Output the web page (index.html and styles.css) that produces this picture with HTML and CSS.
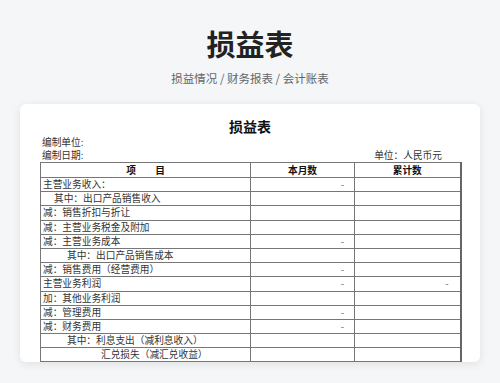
FILE: index.html
```html
<!DOCTYPE html>
<html lang="zh-CN">
<head>
<meta charset="utf-8">
<title>损益表</title>
<link rel="stylesheet" href="styles.css">
</head>
<body>
<div class="page">
  <h1 class="title">损益表</h1>
  <p class="sub">损益情况 / 财务报表 / 会计账表</p>
  <div class="card">
    <div class="sheet-title">损益表</div>
    <div class="meta">编制单位:</div>
    <div class="meta meta-row"><span>编制日期:</span><span>单位：人民币元</span></div>
    <table class="sheet">
      <colgroup><col class="c1"><col class="c2"><col class="c3"></colgroup>
      <tr class="head"><th>项　　目</th><th>本月数</th><th>累计数</th></tr>
      <tr><td>主营业务收入：</td><td class="num">-</td><td></td></tr>
      <tr><td class="i1">其中：出口产品销售收入</td><td></td><td></td></tr>
      <tr><td>减：销售折扣与折让</td><td></td><td></td></tr>
      <tr><td>减：主营业务税金及附加</td><td></td><td></td></tr>
      <tr><td>减：主营业务成本</td><td class="num">-</td><td></td></tr>
      <tr><td class="i2">其中：出口产品销售成本</td><td></td><td></td></tr>
      <tr><td>减：销售费用（经营费用）</td><td class="num">-</td><td></td></tr>
      <tr><td>主营业务利润</td><td class="num">-</td><td class="num">-</td></tr>
      <tr><td>加：其他业务利润</td><td></td><td></td></tr>
      <tr><td>减：管理费用</td><td class="num">-</td><td></td></tr>
      <tr><td>减：财务费用</td><td class="num">-</td><td></td></tr>
      <tr><td class="i2">其中：利息支出（减利息收入）</td><td></td><td></td></tr>
      <tr><td class="i3">汇兑损失（减汇兑收益）</td><td></td><td></td></tr>
      <tr><td>&nbsp;</td><td></td><td></td></tr>
    </table>
  </div>
</div>
</body>
</html>
```

FILE: styles.css
```css
html, body {
  margin: 0;
  padding: 0;
  height: 383px;
  overflow: hidden;
  background: #f5f6f8;
  font-family: "Noto Sans CJK SC", "Noto Sans", sans-serif;
}
.page {
  padding: 26px 20px 0;
}
.title {
  margin: 0;
  text-align: center;
  font-size: 29px;
  line-height: 34px;
  font-weight: 700;
  color: #222;
}
.sub {
  margin: 10px 0 0;
  text-align: center;
  font-size: 11.5px;
  line-height: 16px;
  color: #666;
}
.card {
  margin-top: 18px;
  height: 258px;
  background: #fff;
  border-radius: 6px;
  box-shadow: 0 2px 10px rgba(0, 0, 0, 0.09);
  overflow: hidden;
  padding: 0 20px;
}
.sheet-title {
  margin-top: 13px;
  text-align: center;
  font-size: 14px;
  line-height: 18px;
  font-weight: 700;
  color: #111;
}
.meta {
  margin-top: 1px;
  font-size: 9.7px;
  line-height: 13px;
  color: #333;
  padding-left: 2px;
}
.meta-row {
  margin-top: 0;
  display: flex;
  justify-content: space-between;
  padding-right: 18px;
}
.sheet {
  width: 420px;
  border-collapse: collapse;
  table-layout: fixed;
  font-size: 9.7px;
  color: #333;
  border-left: 1px solid #666;
  border-right: 2px solid #666;
}
.c1 { width: 210px; }
.c2 { width: 104px; }
.c3 { width: 106px; }
.sheet th, .sheet td {
  border: 1px solid #777;
  padding: 0 0 0 2px;
  height: 13.2px;
  line-height: 13px;
  white-space: nowrap;
  text-align: left;
}
.sheet tr.head th {
  height: 14px;
  text-align: center;
  font-weight: 700;
  color: #111;
  padding: 0;
}
.sheet td.num {
  text-align: right;
  padding-right: 10px;
  color: #666;
}
.sheet td.num:last-child {
  padding-right: 11px;
}
.sheet td.i1 { padding-left: 13px; }
.sheet td.i2 { padding-left: 26px; }
.sheet td.i3 { padding-left: 60px; }
```
